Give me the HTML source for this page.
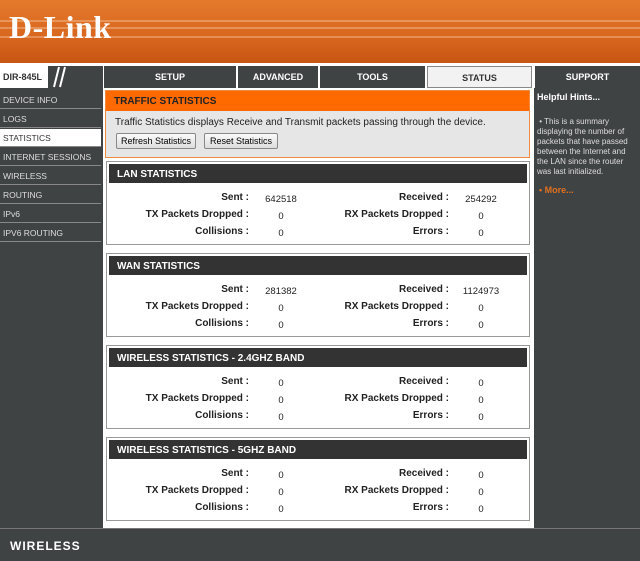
<!DOCTYPE html><html><head><style>
*{margin:0;padding:0;box-sizing:border-box}
body{width:640px;height:561px;background:#404344;font-family:"Liberation Sans","DejaVu Sans",sans-serif;position:relative;overflow:hidden}
.a{position:absolute}
#hdr{left:0;top:0;width:640px;height:63px;background:linear-gradient(#e47a2c,#d8661e 60%,#c85614)}
.stripe{left:0;width:640px;height:2px;background:rgba(255,220,190,.35)}
#logo{left:9px;top:9px;font-family:"Liberation Serif",serif;font-weight:bold;font-size:32px;color:#fff;letter-spacing:0.5px}
#nav{left:0;top:63px;width:640px;height:26px;background:#fff}
.tab{top:66px;height:22px;background:#404344;color:#fff;font-size:9px;font-weight:bold;text-align:center;line-height:22px}
.side{left:0;width:101px;height:18px;color:#ddd;font-size:8.5px;line-height:18px;padding-left:3px;border-bottom:1px solid #888}
.box{left:106px;width:424px;background:#fff;border:1px solid #999}
.bh{height:21px;background:#333;color:#fff;font-weight:bold;font-size:10px;line-height:21px;padding-left:8px;border:2px solid #fff;border-bottom:none}
.l{position:absolute;font-weight:bold;font-size:10px;color:#222;text-align:right;width:200px}
.v{position:absolute;font-size:9.5px;color:#222;text-align:center;width:60px}
.btn{position:absolute;top:133px;height:16px;border:1px solid #888;background:linear-gradient(#fafafa,#ddd);font-size:9px;line-height:14px;text-align:center;border-radius:2px}
</style></head><body>
<div id="hdr" class="a"></div>
<div class="a stripe" style="top:20px"></div>
<div class="a stripe" style="top:27px"></div>
<div class="a stripe" style="top:36px"></div>
<div id="logo" class="a">D-Link</div>
<div id="nav" class="a"></div>
<div class="a" style="left:0;top:66px;width:103px;height:22px;background:#404344"></div>
<div class="a" style="left:0;top:66px;width:48px;height:22px;background:#fff;font-size:9px;font-weight:bold;line-height:22px;padding-left:3px;color:#333">DIR-845L</div>
<svg class="a" style="left:48px;top:66px" width="20" height="22"><path d="M6 21L11 1M12 21L17 1" stroke="#fff" stroke-width="2"/></svg>
<div class="a tab" style="left:104px;width:132px">SETUP</div>
<div class="a tab" style="left:238px;width:80px">ADVANCED</div>
<div class="a tab" style="left:320px;width:105px">TOOLS</div>
<div class="a tab" style="left:427px;width:105px;background:#f2f2f2;color:#333;border:1px solid #888">STATUS</div>
<div class="a tab" style="left:535px;width:105px">SUPPORT</div>
<div class="a" style="left:0;top:88px;width:103px;height:440px;background:#404344"></div>
<div class="a side" style="top:91px">DEVICE INFO</div>
<div class="a side" style="top:110px">LOGS</div>
<div class="a side" style="top:129px;background:#fff;color:#333">STATISTICS</div>
<div class="a side" style="top:148px">INTERNET SESSIONS</div>
<div class="a side" style="top:167px">WIRELESS</div>
<div class="a side" style="top:186px">ROUTING</div>
<div class="a side" style="top:205px">IPv6</div>
<div class="a side" style="top:224px">IPV6 ROUTING</div>
<div class="a" style="left:103px;top:88px;width:431px;height:440px;background:#fff"></div>
<div class="a" style="left:534px;top:88px;width:106px;height:440px;background:#404344"></div>
<div class="a" style="left:537px;top:92px;font-size:9px;font-weight:bold;color:#fff">Helpful Hints...</div>
<div class="a" style="left:537px;top:117px;width:98px;font-size:8px;line-height:10px;color:#ddd">&nbsp;&bull; This is a summary displaying the number of packets that have passed between the Internet and the LAN since the router was last initialized.</div>
<div class="a" style="left:539px;top:185px;font-size:9px;font-weight:bold;color:#e07020">&bull; More...</div>
<div class="a" style="left:105px;top:90px;width:425px;height:68px;background:#e6e6e6;border:1px solid #f08a40"></div>
<div class="a" style="left:106px;top:91px;width:423px;height:20px;background:#ff6a00;font-size:10px;font-weight:bold;line-height:22px;padding-left:8px;color:#222">TRAFFIC STATISTICS</div>
<div class="a" style="left:115px;top:117px;font-size:10px;color:#222">Traffic Statistics displays Receive and Transmit packets passing through the device.</div>
<div class="btn" style="left:116px;width:80px">Refresh Statistics</div>
<div class="btn" style="left:204px;width:74px">Reset Statistics</div>

<div class="a box" style="top:161px;height:84px"><div class="bh">LAN STATISTICS</div>
<div class="l" style="left:-58px;top:30px">Sent :</div><div class="v" style="left:144px;top:32px">642518</div>
<div class="l" style="left:142px;top:30px">Received :</div><div class="v" style="left:344px;top:32px">254292</div>
<div class="l" style="left:-58px;top:47px">TX Packets Dropped :</div><div class="v" style="left:144px;top:49px">0</div>
<div class="l" style="left:142px;top:47px">RX Packets Dropped :</div><div class="v" style="left:344px;top:49px">0</div>
<div class="l" style="left:-58px;top:64px">Collisions :</div><div class="v" style="left:144px;top:66px">0</div>
<div class="l" style="left:142px;top:64px">Errors :</div><div class="v" style="left:344px;top:66px">0</div></div>

<div class="a box" style="top:253px;height:84px"><div class="bh">WAN STATISTICS</div>
<div class="l" style="left:-58px;top:30px">Sent :</div><div class="v" style="left:144px;top:32px">281382</div>
<div class="l" style="left:142px;top:30px">Received :</div><div class="v" style="left:344px;top:32px">1124973</div>
<div class="l" style="left:-58px;top:47px">TX Packets Dropped :</div><div class="v" style="left:144px;top:49px">0</div>
<div class="l" style="left:142px;top:47px">RX Packets Dropped :</div><div class="v" style="left:344px;top:49px">0</div>
<div class="l" style="left:-58px;top:64px">Collisions :</div><div class="v" style="left:144px;top:66px">0</div>
<div class="l" style="left:142px;top:64px">Errors :</div><div class="v" style="left:344px;top:66px">0</div></div>

<div class="a box" style="top:345px;height:84px"><div class="bh">WIRELESS STATISTICS - 2.4GHZ BAND</div>
<div class="l" style="left:-58px;top:30px">Sent :</div><div class="v" style="left:144px;top:32px">0</div>
<div class="l" style="left:142px;top:30px">Received :</div><div class="v" style="left:344px;top:32px">0</div>
<div class="l" style="left:-58px;top:47px">TX Packets Dropped :</div><div class="v" style="left:144px;top:49px">0</div>
<div class="l" style="left:142px;top:47px">RX Packets Dropped :</div><div class="v" style="left:344px;top:49px">0</div>
<div class="l" style="left:-58px;top:64px">Collisions :</div><div class="v" style="left:144px;top:66px">0</div>
<div class="l" style="left:142px;top:64px">Errors :</div><div class="v" style="left:344px;top:66px">0</div></div>

<div class="a box" style="top:437px;height:84px"><div class="bh">WIRELESS STATISTICS - 5GHZ BAND</div>
<div class="l" style="left:-58px;top:30px">Sent :</div><div class="v" style="left:144px;top:32px">0</div>
<div class="l" style="left:142px;top:30px">Received :</div><div class="v" style="left:344px;top:32px">0</div>
<div class="l" style="left:-58px;top:47px">TX Packets Dropped :</div><div class="v" style="left:144px;top:49px">0</div>
<div class="l" style="left:142px;top:47px">RX Packets Dropped :</div><div class="v" style="left:344px;top:49px">0</div>
<div class="l" style="left:-58px;top:64px">Collisions :</div><div class="v" style="left:144px;top:66px">0</div>
<div class="l" style="left:142px;top:64px">Errors :</div><div class="v" style="left:344px;top:66px">0</div></div>

<div class="a" style="left:0;top:528px;width:640px;height:33px;background:#404344;border-top:1px solid #777"></div>
<div class="a" style="left:10px;top:539px;font-size:12px;font-weight:bold;color:#fff;letter-spacing:1px">WIRELESS</div>
</body></html>
